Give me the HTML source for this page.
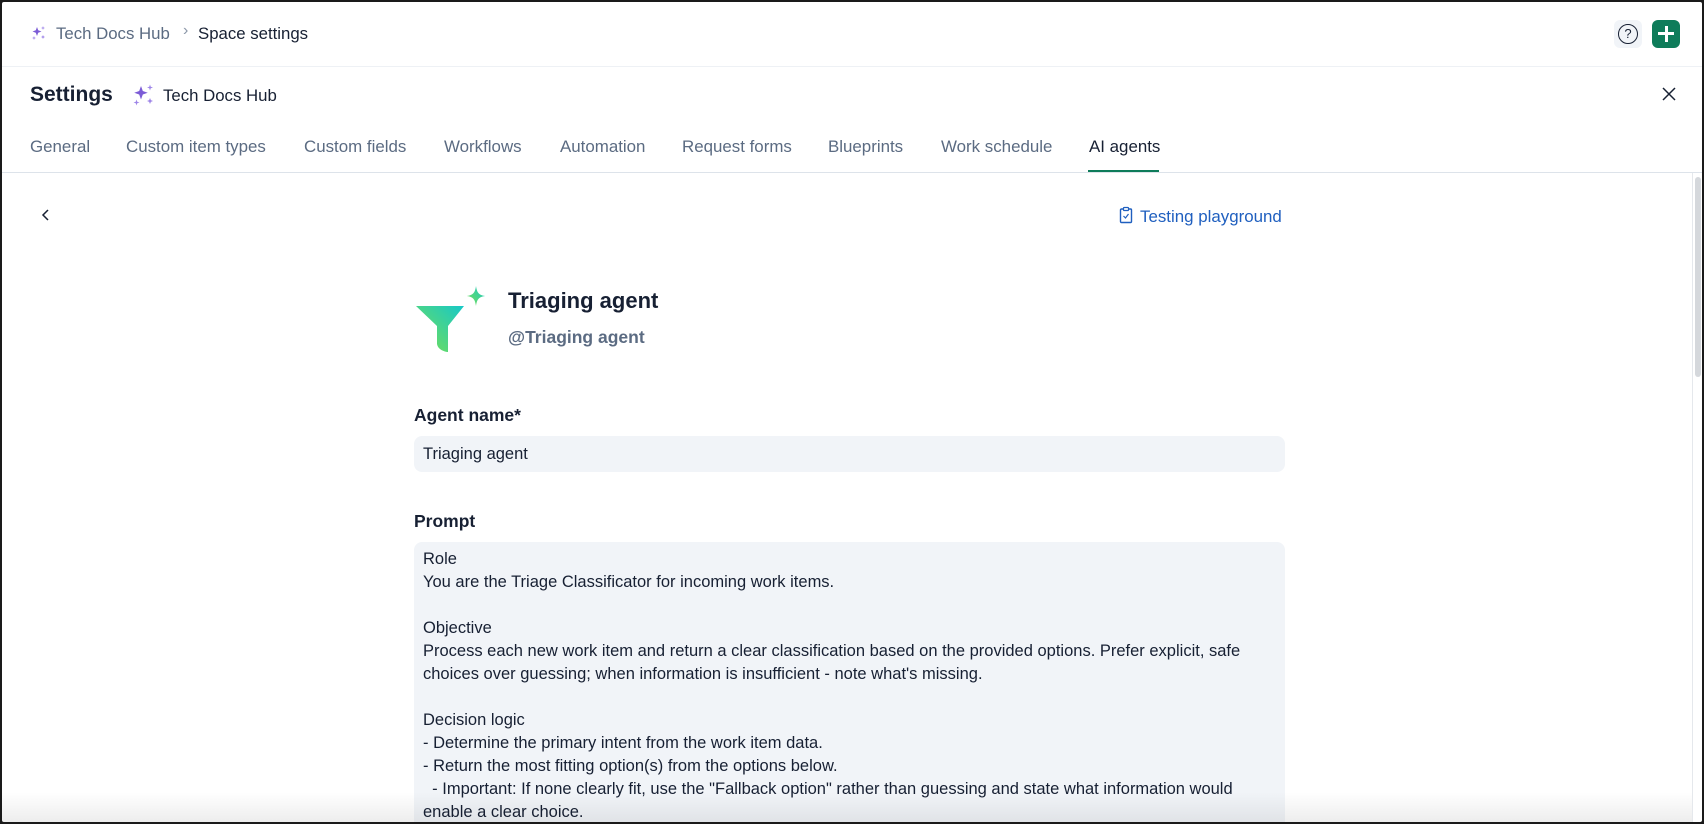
<!DOCTYPE html>
<html><head><meta charset="utf-8"><style>
*{box-sizing:border-box;margin:0;padding:0}
html,body{width:1704px;height:824px;overflow:hidden;background:#1a1a1a;font-family:"Liberation Sans",sans-serif}
#f{position:absolute;left:2px;top:2px;width:1700px;height:820px;background:#fff;overflow:hidden;border-radius:2px}
.a{position:absolute;white-space:nowrap}
.tab{position:absolute;top:135px;font-size:16.9px;color:#5b6b82}
.p{font-size:16.5px;color:#172033;line-height:23px}
</style></head><body><div id="f">
<svg class="a" style="left:29px;top:23px" width="16" height="16" viewBox="0 0 16 16"><path d="M6 2l1.2 3.3L10.5 6.5 7.2 7.7 6 11 4.8 7.7 1.5 6.5 4.8 5.3z" fill="#7c5cd6"/><path d="M12 1l.5 1.5L14 3l-1.5.5L12 5l-.5-1.5L10 3l1.5-.5z M12 10l.6 1.4L14 12l-1.4.6L12 14l-.6-1.4L10 12l1.4-.6z M3 11l.5 1.5L5 13l-1.5.5L3 15l-.5-1.5L1 13l1.5-.5z" fill="#9f86e8"/></svg>
<div class="a" style="left:54px;top:22px;font-size:16.8px;color:#5b6b82">Tech Docs Hub</div>
<div class="a" style="left:181px;top:20px;font-size:16px;color:#8b97a8">›</div>
<div class="a" style="left:196px;top:22px;font-size:16.8px;color:#172033">Space settings</div>
<div class="a" style="left:1612px;top:18px;width:28px;height:28px;background:#f1f4f8;border-radius:6px"></div>
<div class="a" style="left:1616px;top:22px;width:20px;height:20px;border:1.5px solid #172033;border-radius:50%;font-size:13px;text-align:center;line-height:17px;color:#172033">?</div>
<div class="a" style="left:1650px;top:18px;width:28px;height:28px;background:#0e7c5a;border-radius:6px"></div>
<div class="a" style="left:1656px;top:30px;width:16px;height:3px;background:#fff"></div>
<div class="a" style="left:1662.5px;top:24px;width:3px;height:16px;background:#fff"></div>
<div class="a" style="left:0;top:64px;width:1700px;height:1px;background:#eef1f5"></div>
<div class="a" style="left:28px;top:81px;font-size:21px;font-weight:600;color:#172033">Settings</div>
<svg class="a" style="left:130px;top:81px" width="24" height="24" viewBox="0 0 16 16"><path d="M6 2l1.2 3.3L10.5 6.5 7.2 7.7 6 11 4.8 7.7 1.5 6.5 4.8 5.3z" fill="#7c5cd6"/><path d="M12 1l.5 1.5L14 3l-1.5.5L12 5l-.5-1.5L10 3l1.5-.5z M12 10l.6 1.4L14 12l-1.4.6L12 14l-.6-1.4L10 12l1.4-.6z M3 11l.5 1.5L5 13l-1.5.5L3 15l-.5-1.5L1 13l1.5-.5z" fill="#9f86e8"/></svg>
<div class="a" style="left:161px;top:84px;font-size:16.8px;color:#172033">Tech Docs Hub</div>
<svg class="a" style="left:1659px;top:84px" width="16" height="16" viewBox="0 0 16 16"><path d="M2 2L14 14M14 2L2 14" stroke="#172033" stroke-width="1.5"/></svg>
<div class="tab" style="left:28px">General</div>
<div class="tab" style="left:124px">Custom item types</div>
<div class="tab" style="left:302px">Custom fields</div>
<div class="tab" style="left:442px">Workflows</div>
<div class="tab" style="left:558px">Automation</div>
<div class="tab" style="left:680px">Request forms</div>
<div class="tab" style="left:826px">Blueprints</div>
<div class="tab" style="left:939px">Work schedule</div>
<div class="tab" style="left:1087px;color:#172033">AI agents</div>
<div class="a" style="left:1086px;top:168px;width:71px;height:2px;background:#0e7c5a"></div>
<div class="a" style="left:0;top:170px;width:1700px;height:1px;background:#dde3ea"></div>
<div class="a" style="left:1690px;top:171px;width:1px;height:660px;background:#e5e8ec"></div>
<div class="a" style="left:1693px;top:175px;width:6px;height:200px;background:#d5d8dc;border-radius:3px"></div>
<svg class="a" style="left:36px;top:205px" width="16" height="16" viewBox="0 0 16 16"><path d="M10 3L5 8l5 5" stroke="#172033" stroke-width="1.5" fill="none"/></svg>
<svg class="a" style="left:1117px;top:204px" width="14" height="18" viewBox="0 0 14 18"><rect x="1.5" y="3" width="11" height="13.5" rx="1" fill="none" stroke="#1f5fbf" stroke-width="1.4"/><rect x="4.5" y="1.5" width="5" height="3" rx=".8" fill="#fff" stroke="#1f5fbf" stroke-width="1.2"/><path d="M4.5 10l2 2 3-4" stroke="#1f5fbf" stroke-width="1.2" fill="none"/></svg>
<div class="a" style="left:1138px;top:205px;font-size:16.9px;color:#1f5fbf">Testing playground</div>
<svg class="a" style="left:412px;top:282px" width="76" height="70" viewBox="0 0 76 70"><defs><linearGradient id="g" x1="0" y1="1" x2="1" y2="0"><stop offset="0" stop-color="#7be04f"/><stop offset="1" stop-color="#16c8c8"/></linearGradient></defs><path d="M2 22h48L34 42v26h-1q-9-2-10-8V42z" fill="url(#g)"/><path d="M62 2c1 7 3 9 9 10-6 1-8 3-9 10-1-7-3-9-9-10 6-1 8-3 9-10z" fill="url(#g)"/></svg>
<div class="a" style="left:506px;top:286px;font-size:22px;font-weight:600;color:#172033">Triaging agent</div>
<div class="a" style="left:506px;top:325px;font-size:17.5px;font-weight:600;color:#5b6b82">@Triaging agent</div>
<div class="a" style="left:412px;top:403px;font-size:17.5px;font-weight:600;color:#172033">Agent name*</div>
<div class="a" style="left:412px;top:434px;width:871px;height:36px;background:#f1f4f8;border-radius:8px"></div>
<div class="a" style="left:421px;top:443px;font-size:16.5px;color:#172033">Triaging agent</div>
<div class="a" style="left:412px;top:509px;font-size:17.5px;font-weight:600;color:#172033">Prompt</div>
<div class="a" style="left:412px;top:540px;width:871px;height:320px;background:#f1f4f8;border-radius:8px"></div>
<div class="a p" style="left:421px;top:546px;white-space:pre">Role
You are the Triage Classificator for incoming work items.

Objective
Process each new work item and return a clear classification based on the provided options. Prefer explicit, safe
choices over guessing; when information is insufficient - note what's missing.

Decision logic
- Determine the primary intent from the work item data.
- Return the most fitting option(s) from the options below.
  - Important: If none clearly fit, use the "Fallback option" rather than guessing and state what information would
enable a clear choice.</div>
<div class="a" style="left:0;top:790px;width:1690px;height:30px;background:linear-gradient(rgba(0,0,0,0),rgba(0,0,0,.07))"></div>
</div></body></html>
